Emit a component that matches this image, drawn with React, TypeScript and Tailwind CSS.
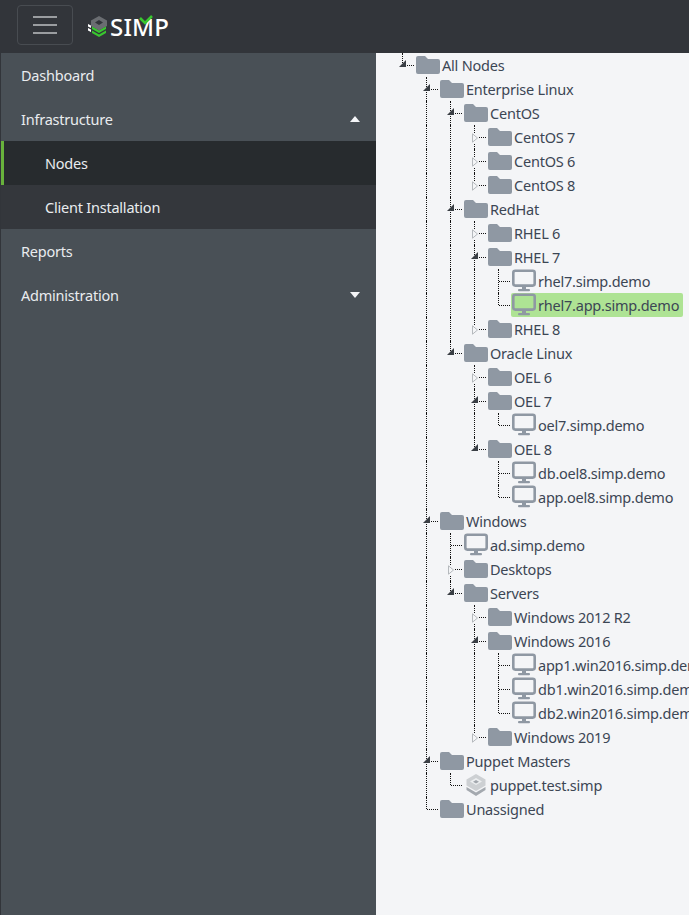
import React from "react";

type Node = { label: string; kind?: "folder" | "host" | "puppet"; open?: boolean; selected?: boolean; children?: Node[] };

const host = (label: string, selected = false): Node => ({ label, kind: "host", selected });
const closed = (label: string): Node => ({ label, kind: "folder", open: false, children: [] });
const openF = (label: string, children: Node[]): Node => ({ label, kind: "folder", open: true, children });

const tree: Node = openF("All Nodes", [
  openF("Enterprise Linux", [
    openF("CentOS", [closed("CentOS 7"), closed("CentOS 6"), closed("CentOS 8")]),
    openF("RedHat", [
      closed("RHEL 6"),
      openF("RHEL 7", [host("rhel7.simp.demo"), host("rhel7.app.simp.demo", true)]),
      closed("RHEL 8"),
    ]),
    openF("Oracle Linux", [
      closed("OEL 6"),
      openF("OEL 7", [host("oel7.simp.demo")]),
      openF("OEL 8", [host("db.oel8.simp.demo"), host("app.oel8.simp.demo")]),
    ]),
  ]),
  openF("Windows", [
    host("ad.simp.demo"),
    closed("Desktops"),
    openF("Servers", [
      closed("Windows 2012 R2"),
      openF("Windows 2016", [host("app1.win2016.simp.demo"), host("db1.win2016.simp.demo"), host("db2.win2016.simp.demo")]),
      closed("Windows 2019"),
    ]),
  ]),
  openF("Puppet Masters", [{ label: "puppet.test.simp", kind: "puppet" }]),
  { label: "Unassigned", kind: "folder" },
]);

function FolderIcon() {
  return (
    <svg width="24" height="18" viewBox="0 0 24 18" className="shrink-0">
      <path d="M0 2a2 2 0 0 1 2-2h7l3 3h10a2 2 0 0 1 2 2v11a2 2 0 0 1-2 2H2a2 2 0 0 1-2-2z" fill="#8f98a3" />
    </svg>
  );
}

function HostIcon({ selected }: { selected?: boolean }) {
  return (
    <svg width="24" height="24" viewBox="0 0 24 24" className="shrink-0">
      {selected ? <rect x="2" y="2" width="20" height="14" fill="#aee394" /> : null}
      <rect x="1.3" y="1.8" width="21.4" height="14.800" rx="2" fill="none" stroke="#8f98a3" strokeWidth="2.6" />
      <rect x="10" y="17" width="4" height="4" fill="#8f98a3" />
      <rect x="6" y="20" width="12" height="2.200" rx="1" fill="#8f98a3" />
    </svg>
  );
}

function PuppetIcon() {
  return (
    <svg width="24" height="24" viewBox="0 0 24 24" className="shrink-0">
      <path d="M12 1 21.500 6.500v6L12 18 2.500 12.500v-6z" fill="#cdd0d3" />
      <path d="M12 5 18 8.500 12 12 6 8.500z" fill="#eceef0" />
      <path d="M12 7 15 8.800 12 10.600 9 8.800z" fill="#a2a7ad" />
      <path d="M2.500 14 12 19.500 21.500 14v3L12 23 2.500 17z" fill="#a4a9af" />
    </svg>
  );
}

function Toggle({ open }: { open: boolean }) {
  return open ? (
    <svg width="7" height="7" viewBox="0 0 7 7" className="absolute left-[9px] top-[7px]">
      <path d="M7 0v7H0z" fill="#3a3f45" />
    </svg>
  ) : (
    <svg width="6" height="10" viewBox="0 0 6 10" className="absolute left-[10px] top-[8px] bg-[#f4f5f7]">
      <path d="M.5.800v8.400L5.500 5z" fill="#f4f5f7" stroke="#b5b9bd" />
    </svg>
  );
}

function Row({ node, guides, last }: { node: Node; guides: boolean[]; last: boolean }) {
  const kids = node.open ? node.children ?? [] : [];
  const hasToggle = node.children !== undefined && node.kind === "folder";
  return (
    <>
      <div className="flex h-6 items-center">
        {guides.map((g, i) => (
          <div key={i} className="relative h-6 w-6 shrink-0">
            {g ? <div className="absolute bottom-0 left-[12px] top-0 border-l border-dotted border-[#111]" /> : null}
          </div>
        ))}
        <div className="relative mr-0.5 h-6 w-6 shrink-0">
          <div className={"absolute left-[12px] top-0 border-l border-dotted border-[#111] " + (last ? "h-3" : "h-6")} />
          <div className="absolute left-[13px] top-[12px] w-[11px] border-t border-dotted border-[#111]" />
          {hasToggle ? <Toggle open={!!node.open} /> : null}
        </div>
        <div className={"flex h-6 items-center gap-0.5 rounded-[2px] " + (node.selected ? "-ml-px bg-[#aee394] pl-px pr-[4px]" : "")}>
          {node.kind === "host" ? <HostIcon selected={node.selected} /> : node.kind === "puppet" ? <PuppetIcon /> : <FolderIcon />}
          <span className="whitespace-nowrap text-[14.500px] leading-6 tracking-[-0.22px] text-[#3c4654]">{node.label}</span>
        </div>
      </div>
      {kids.map((k, i) => (
        <Row key={k.label} node={k} guides={[...guides, !last]} last={i === kids.length - 1} />
      ))}
    </>
  );
}

function NavItem({ label, caret, sub, active }: { label: string; caret?: "up" | "down"; sub?: boolean; active?: boolean }) {
  return (
    <div
      className={
        "flex h-11 items-center justify-between text-[14.500px] tracking-[-0.22px] text-[#e9ecef] " +
        (active
          ? "border-l-[3px] border-[#68b23c] bg-[#272b2e] pl-[41px]"
          : sub
            ? "border-l-[3px] border-transparent bg-[#34373c] pl-[41px]"
            : "pl-[20px]")
      }
    >
      <span className="leading-6">{label}</span>
      {caret ? (
        <svg width="10" height="6" viewBox="0 0 10 6" className="mr-[16px]">
          <path d={caret === "up" ? "M5 0l5 6H0z" : "M0 0h10L5 6z"} fill="#f4f5f7" />
        </svg>
      ) : null}
    </div>
  );
}

export default function App() {
  return (
    <div className="flex h-[915px] w-[689px] flex-col overflow-hidden font-['Noto_Sans','Open_Sans',sans-serif]">
      <header className="flex h-[53px] shrink-0 items-start bg-[#32353a] pl-[17px] pt-[5px]">
        <button className="flex h-10 w-14 flex-col items-center justify-center gap-[6px] rounded border border-[#484c51]">
          <span className="h-0.5 w-6 bg-[#9a9da0]" />
          <span className="h-0.5 w-6 bg-[#9a9da0]" />
          <span className="h-0.5 w-6 bg-[#9a9da0]" />
        </button>
        <div className="ml-[15px] mt-[10px] flex items-center">
          <svg width="20" height="22" viewBox="0 0 20 22" className="shrink-0">
            <path d="M11 0l8 4.500V10l-8 4.500L3 10V4.500z" fill="#6a6d71" />
            <path d="M11 4l4 2.500-4 2.500-4-2.500z" fill="#32353a" />
            <path d="M4 10.500l7 4 7-4V13l-7 4-7-4z" fill="#39c72f" />
            <path d="M4 14.500l7 4 7-4V17l-7 4-7-4z" fill="#39c72f" />
            <path d="M0 8l3 1.500V12L0 10.500zM0 12l3 1.500V16L0 14.500z" fill="#fff" />
          </svg>
          <div className="relative ml-[2px] text-[24px] font-medium leading-none tracking-[0.2px] text-white">
            SIMP
            <svg width="14" height="10" viewBox="0 0 14 10" className="absolute left-[29px] top-[0px]">
              <path d="M1 3l5 5 7-7" fill="none" stroke="#39c72f" strokeWidth="2.600" />
            </svg>
          </div>
        </div>
      </header>
      <div className="flex min-h-0 flex-1">
        <aside className="w-[376px] shrink-0 border-l border-[#32353a] bg-[#495056]">
          <NavItem label="Dashboard" />
          <NavItem label="Infrastructure" caret="up" />
          <NavItem label="Nodes" sub active />
          <NavItem label="Client Installation" sub />
          <NavItem label="Reports" />
          <NavItem label="Administration" caret="down" />
        </aside>
        <main className="min-w-0 flex-1 overflow-hidden bg-[#f4f5f7] pl-[14px]">
          <Row node={tree} guides={[]} last />
        </main>
      </div>
    </div>
  );
}
